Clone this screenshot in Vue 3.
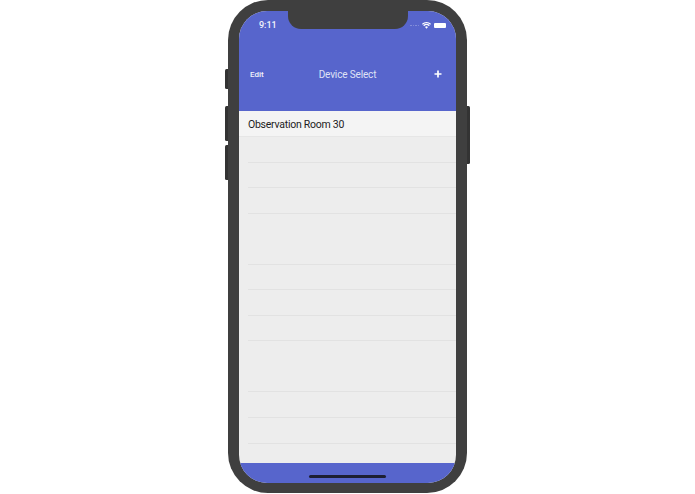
<script setup>
const rows = [0, 1, 2, 3, 4, 5, 6, 7, 8, 9, 10, 11]
const hidden = [3, 8]
</script>

<template>
  <div class="page">
    <div class="phone">
      <span class="btn left mute"></span>
      <span class="btn left up"></span>
      <span class="btn left down"></span>
      <span class="btn right power"></span>
      <div class="screen">
        <div class="notch"></div>
        <header class="head">
          <div class="status">
            <span class="time">9:11</span>
            <span class="indicators">
              <span class="dots"><i></i><i></i><i></i><i></i></span>
              <svg class="wifi" width="9" height="7" viewBox="0 0 18 13">
                <path d="M9 13 6 9.6a4.400 4.400 0 0 1 6 0Z M4.300 7.800 2.500 5.800a9.600 9.600 0 0 1 13 0l-1.800 2a7 7 0 0 0-9.400 0Z M1.500 4.800 0 3a13.500 13.500 0 0 1 18 0l-1.500 1.800a11.200 11.200 0 0 0-15 0Z" fill="#fff"/>
              </svg>
              <span class="battery"></span>
            </span>
          </div>
          <nav class="bar">
            <span class="edit">Edit</span>
            <span class="title">Device Select</span>
            <svg class="plus" width="8" height="8" viewBox="0 0 8 8">
              <path d="M4 .5v7M.5 4h7" stroke="#fff" stroke-width="1.700" fill="none"/>
            </svg>
          </nav>
        </header>
        <div class="item">Observation Room 30</div>
        <div class="list">
          <div v-for="r in rows" :key="r" class="row" :class="{ plain: hidden.includes(r) }"></div>
        </div>
        <footer class="foot"><span class="home"></span></footer>
      </div>
    </div>
  </div>
</template>

<style scoped>
.page {
  width: 695px;
  height: 494px;
  background: #fff;
  display: flex;
  justify-content: center;
  align-items: flex-start;
  font-family: Roboto, "Liberation Sans", Arial, sans-serif;
  overflow: hidden;
}
.phone {
  position: relative;
  width: 239px;
  height: 493px;
  box-sizing: border-box;
  padding: 11px 11px 10px;
  background: #3f3f3f;
  border-radius: 40px;
}
.btn {
  position: absolute;
  background: #333;
}
.btn.left {
  left: -3.5px;
  width: 3.5px;
  border-radius: 1.5px 0 0 1.5px;
}
.btn.right {
  right: -3px;
  width: 3px;
  border-radius: 0 1.5px 1.5px 0;
}
.mute { top: 69px; height: 20px; }
.up { top: 106px; height: 35px; }
.down { top: 145px; height: 35px; }
.power { top: 106px; height: 58px; }
.screen {
  position: relative;
  height: 472px;
  border-radius: 28px;
  overflow: hidden;
  background: #ededed;
  display: flex;
  flex-direction: column;
}
.notch {
  position: absolute;
  left: 49px;
  top: 0;
  width: 120px;
  height: 18px;
  background: #3f3f3f;
  border-radius: 0 0 13px 13px;
}
.head {
  height: 100px;
  flex: none;
  background: #5765cc;
  color: #fff;
}
.status {
  height: 28px;
  box-sizing: border-box;
  padding: 9px 10px 0 20px;
  display: flex;
  justify-content: space-between;
  align-items: flex-start;
}
.time {
  font-size: 9px;
  line-height: 11px;
  font-weight: 500;
  color: #f2f3fb;
}
.indicators {
  display: flex;
  align-items: center;
  gap: 3px;
  height: 11px;
}
.dots {
  display: flex;
  gap: 1px;
}
.dots i {
  width: 1.500px;
  height: 1.500px;
  border-radius: 50%;
  background: #8a94dc;
}
.battery {
  width: 12px;
  height: 5px;
  border-radius: 1px;
  background: #fff;
}
.bar {
  height: 16px;
  margin-top: 27px;
  padding: 0 14px 0 11px;
  display: flex;
  align-items: center;
  justify-content: space-between;
  position: relative;
}
.edit {
  font-size: 8px;
  font-weight: 500;
  color: #f1f2fb;
}
.title {
  position: absolute;
  left: 0;
  right: 0;
  text-align: center;
  font-size: 10px;
  letter-spacing: -0.150px;
  color: #dfe2f6;
}
.plus {
  display: block;
}
.item {
  height: 26px;
  flex: none;
  box-sizing: border-box;
  padding-left: 9px;
  line-height: 27px;
  font-size: 10.500px;
  letter-spacing: -0.250px;
  color: #1c1c1c;
  background: #f4f4f4;
  border-bottom: 1px solid #e6e6e6;
}
.list {
  flex: 1;
  overflow: hidden;
  padding-left: 9px;
}
.row {
  height: 25.560px;
  box-sizing: border-box;
  border-bottom: 1px solid #e2e2e2;
}
.row.plain {
  border-bottom-color: transparent;
}
.foot {
  height: 20px;
  flex: none;
  background: #5765cc;
  position: relative;
  display: flex;
  justify-content: center;
  align-items: flex-end;
  padding-bottom: 5px;
  box-sizing: border-box;
}
.home {
  width: 77px;
  height: 3px;
  border-radius: 2px;
  background: #1d1f33;
}
</style>
